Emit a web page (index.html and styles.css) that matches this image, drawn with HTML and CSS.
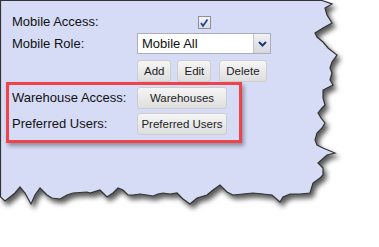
FILE: index.html
```html
<!DOCTYPE html>
<html lang="en">
<head>
<meta charset="UTF-8">
<title>Mobile Settings</title>
<link rel="stylesheet" href="styles.css">
</head>
<body>

<div class="page">
    <svg class="paper" width="379" height="247" viewBox="0 0 379 247">
        <path d="M0.5,0.5 L322,0.5 332,4 325,8 327,15 332,23 323,28 315,33 317,37 323,42 328,48 337,55 332,62 330,68 332,73 330,80 333,85 323,90 323,98 325,105 322,108 318,113 321,118 325,123 322,128 317,133 315,140 317,145 323,148 335,153 327,155 318,163 323,168 323,175 320,178 313,183 310,193 300,194 290,194 283,197 280,202 272,195 263,194 253,193 243,194 233,195 227,192 220,185 213,190 207,195 197,198 190,204 183,199 177,193 170,194 163,193 158,194 153,196 147,195 140,194 133,195 128,195 123,190 118,188 113,193 107,197 103,193 100,190 90,193 87,192 73,193 67,195 60,199 52,198 47,195 40,188 35,195 31,204 25,193 20,187 15,193 5,201 0.5,197 Z"/>
    </svg>

    <div class="form">
        <div class="row">
            <label class="lbl">Mobile Access:</label>
            <div class="ctl center">
                <span class="check">
                    <svg width="10" height="10" viewBox="0 0 10 10"><path d="M2,5 L4,8 L8.5,1.5"/></svg>
                </span>
            </div>
        </div>
        <div class="row tall">
            <label class="lbl">Mobile Role:</label>
            <div class="ctl">
                <div class="select">
                    <span class="select-text">Mobile All</span>
                    <span class="select-arrow">
                        <svg width="9" height="6" viewBox="0 0 9 6"><path d="M1,1 L4.5,4.5 L8,1"/></svg>
                    </span>
                </div>
            </div>
        </div>
        <div class="row actions">
            <span class="lbl"></span>
            <div class="ctl btns">
                <button class="btn">Add</button>
                <button class="btn">Edit</button>
                <button class="btn">Delete</button>
            </div>
        </div>

        <div class="highlight">
            <div class="row">
                <label class="lbl">Warehouse Access:</label>
                <div class="ctl"><button class="btn wide">Warehouses</button></div>
            </div>
            <div class="row">
                <label class="lbl">Preferred Users:</label>
                <div class="ctl"><button class="btn wide">Preferred Users</button></div>
            </div>
        </div>
    </div>
</div>

</body>
</html>
```

FILE: styles.css
```css
body {
    margin: 0;
    background-color: #fff;
    font-family: "Liberation Sans", Arial, sans-serif;
    color: #111;
}
.page {
    position: relative;
    width: 379px;
    height: 247px;
    overflow: hidden;
}
.paper {
    position: absolute;
    top: 0;
    left: 0;
    filter: drop-shadow(3px 4px 2.5px rgba(0, 0, 0, 0.65));
}
.paper path {
    fill: #d6dcf5;
    stroke: #333;
    stroke-width: 1.2;
}
.form {
    position: relative;
    padding: 11px 0 0 12px;
}
.row {
    display: flex;
    align-items: center;
    height: 22px;
}
.row.tall {
    height: 21px;
}
.lbl {
    flex-shrink: 0;
    width: 125px;
    font-size: 13px;
    line-height: 22px;
    white-space: nowrap;
}
.ctl {
    width: 134px;
    display: flex;
    align-items: center;
}
.ctl.center {
    justify-content: center;
}
.check {
    width: 11px;
    height: 11px;
    border: 1px solid #8c8f9c;
    background: linear-gradient(#f4f4f6, #dcdde2);
    display: flex;
    align-items: center;
    justify-content: center;
    margin-top: 1px;
}
.check path {
    fill: none;
    stroke: #22449a;
    stroke-width: 1.8;
}
.select {
    width: 134px;
    height: 21px;
    box-sizing: border-box;
    border: 1px solid #a9adbd;
    background-color: #fff;
    display: flex;
}
.select-text {
    flex: 1;
    font-size: 13px;
    line-height: 19px;
    padding-left: 4px;
}
.select-arrow {
    width: 16px;
    border-left: 1px solid #c4c6cf;
    background: linear-gradient(#f1f1f3, #d7d8de);
    display: flex;
    align-items: center;
    justify-content: center;
}
.select-arrow path {
    fill: none;
    stroke: #1f3a80;
    stroke-width: 2;
}
.row.actions {
    margin-top: 6px;
}
.btns {
    gap: 6px;
}
.btn {
    height: 22px;
    padding: 0 6px;
    margin: 0;
    font-family: "Liberation Sans", Arial, sans-serif;
    font-size: 11.5px;
    color: #222;
    border: 1px solid #cdcdcd;
    border-radius: 3px;
    background: linear-gradient(#f6f6f6, #dedede);
}
.btns .btn + .btn + .btn {
    margin-left: 2px;
}
.btn.wide {
    width: 90px;
    padding: 0;
}
.highlight {
    width: 227px;
    margin-left: -6px;
    padding: 2px 0 5px 3px;
    border: 3px solid #f0424a;
    box-shadow: 2px 3px 4px rgba(0, 0, 0, 0.35);
}
.highlight .ctl {
    width: auto;
}
.highlight .row + .row {
    margin-top: 4px;
}
```
